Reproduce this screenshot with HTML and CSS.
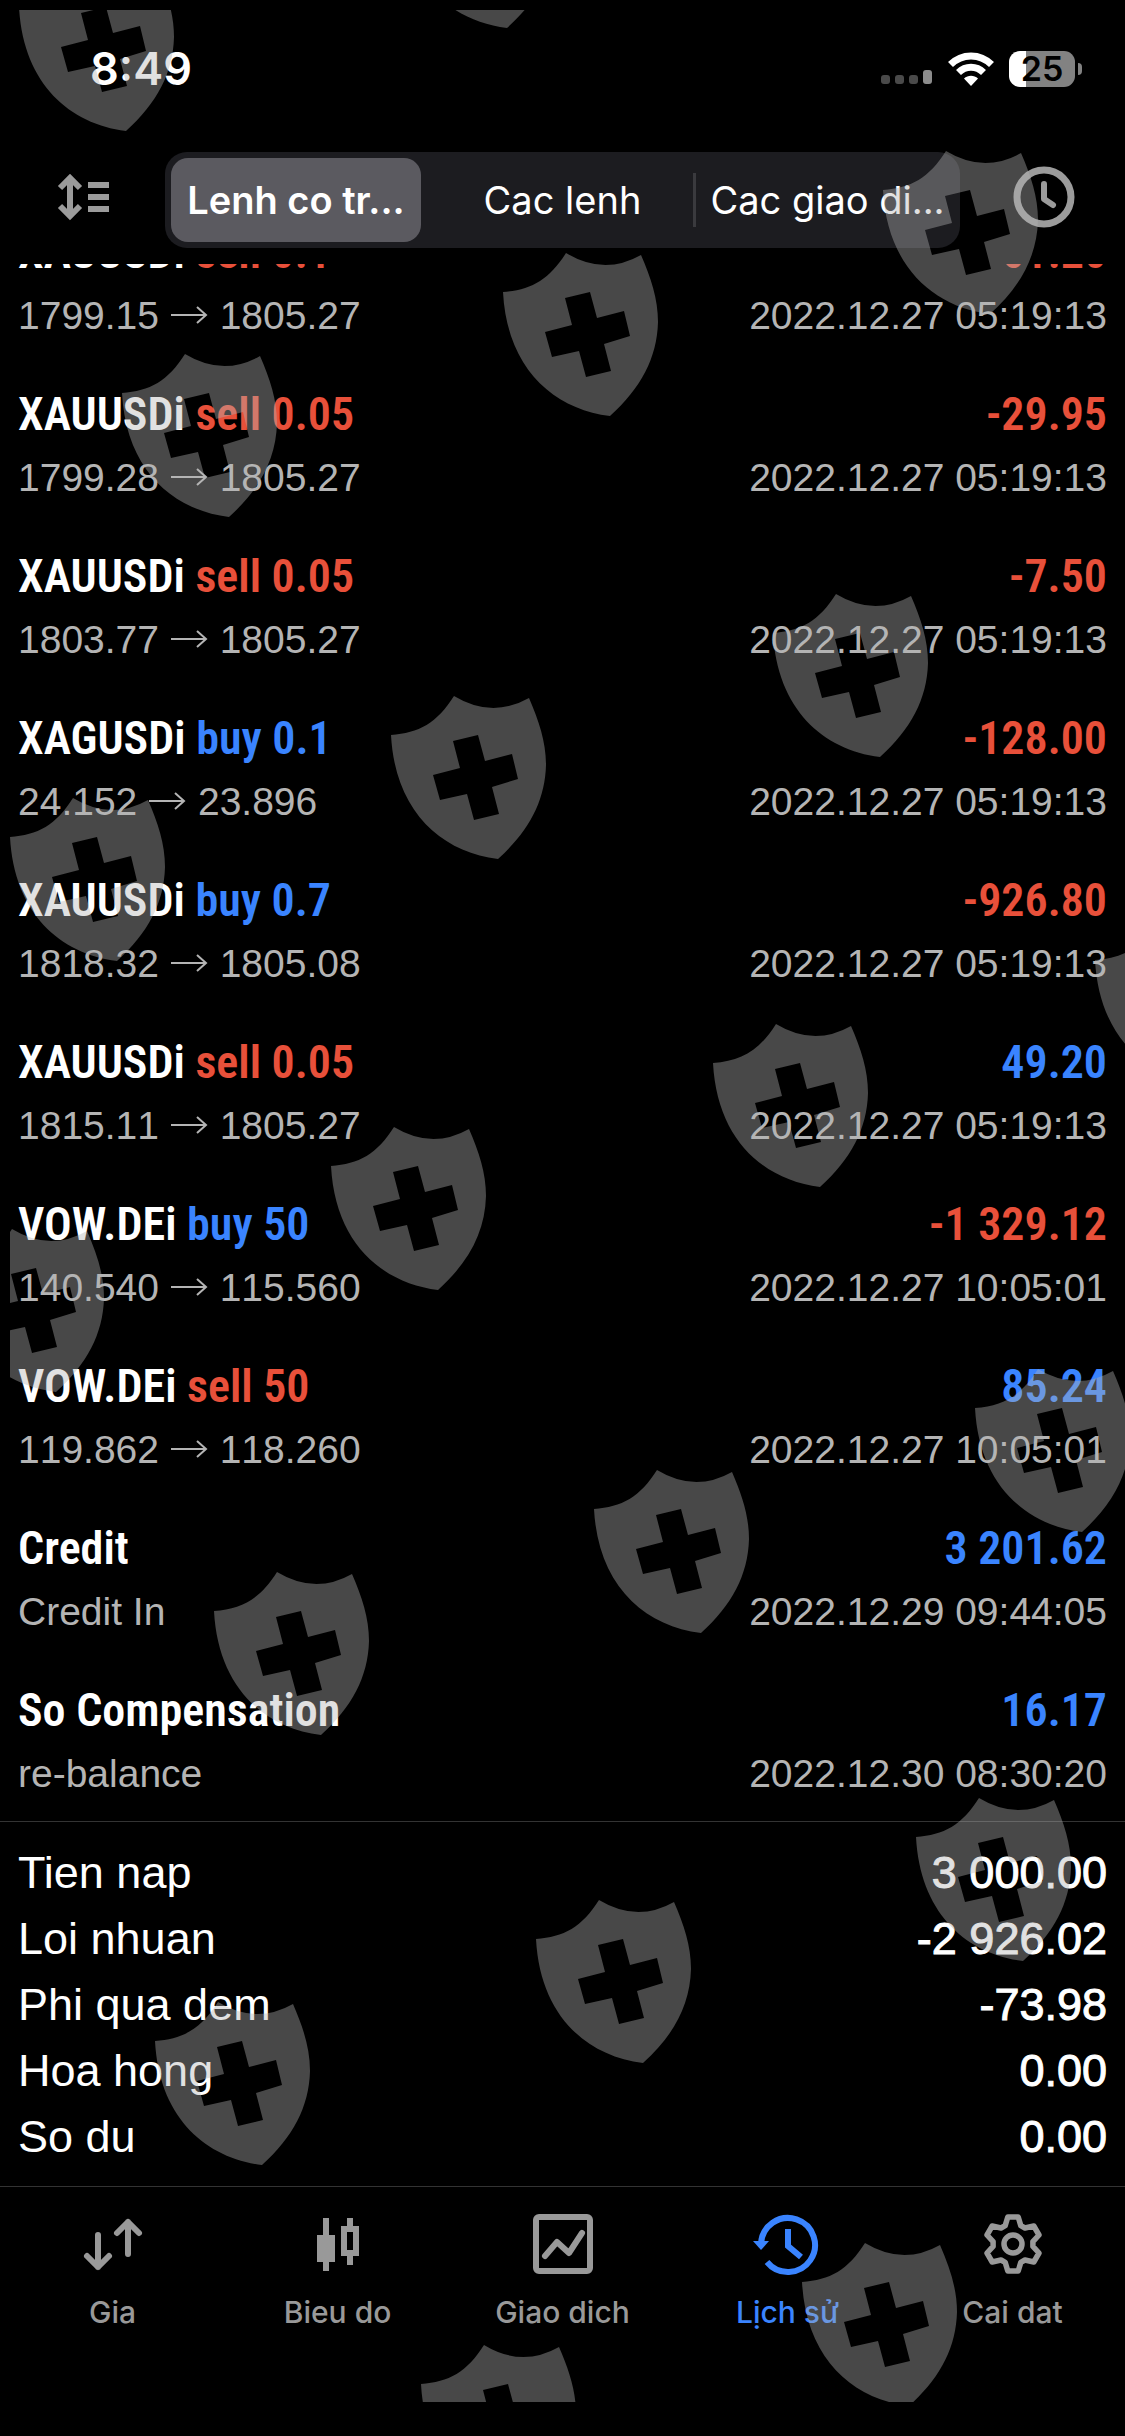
FILE: index.html
```html
<!DOCTYPE html>
<html lang="vi">
<head>
<meta charset="utf-8">
<meta name="viewport" content="width=device-width, initial-scale=1">
<title>Lịch sử</title>
<link rel="stylesheet" href="styles.css">
</head>
<body>
<div class="app">
  <header class="header">
    <div class="status">
      <span class="time">8:49</span>
      <div class="status-icons">
        <svg width="52" height="18" viewBox="0 0 52 18" aria-hidden="true">
          <g fill="#4a4a4a"><rect x="0" y="6" width="9" height="9" rx="3"/><rect x="14" y="6" width="9" height="9" rx="3"/><rect x="28" y="6" width="9" height="9" rx="3"/></g>
          <rect x="42" y="1" width="9" height="14" rx="3" fill="#8c8c8c"/>
        </svg>
        <svg width="46" height="34" viewBox="0 0 46 34" aria-hidden="true">
          <g fill="none" stroke="#fff" stroke-width="7"><path d="M2.500 12.500C14 1 32 1 43.500 12.500"/><path d="M10.500 20.500C17.500 13.500 28.500 13.500 35.500 20.500"/></g>
          <path d="M16 26.500C20 22.800 26 22.800 30 26.500L23 34Z" fill="#fff"/>
        </svg>
        <span class="battery"><span class="battery-body">25</span><span class="battery-cap"></span></span>
      </div>
    </div>
    <div class="toolbar">
      <button class="tool" type="button" aria-label="Sort">
        <svg width="52" height="48" viewBox="0 0 52 48" aria-hidden="true">
          <path d="M12 5V43M2 15L12 5L22 15M2 33L12 43L22 33" fill="none" stroke="currentColor" stroke-width="6"/>
          <path d="M30 9h21v6H30zM30 21h21v6H30zM30 33h21v6H30z" fill="currentColor"/>
        </svg>
      </button>
      <div class="segments">
        <button class="segment selected" type="button" aria-pressed="true">Lenh co tr...</button>
        <button class="segment" type="button">Cac lenh</button>
        <button class="segment divided" type="button">Cac giao di...</button>
      </div>
      <button class="tool" type="button" aria-label="Period">
        <svg width="60" height="60" viewBox="0 0 60 60" aria-hidden="true" fill="none" stroke="currentColor">
          <circle cx="30" cy="30" r="27" stroke-width="7"/>
          <path d="M30 17V32L39 38" stroke-width="6" stroke-linecap="round" stroke-linejoin="round"/>
        </svg>
      </button>
    </div>
  </header>

  <svg class="defs" width="0" height="0" aria-hidden="true">
    <symbol id="arrow" viewBox="0 0 39 20"><path d="M1 10H36M27 2L36 10L27 18" fill="none" stroke="currentColor" stroke-width="2"/></symbol>
    <path id="shield" fill-rule="evenodd" d="M0 39C28 37 46 27 63 0Q101 23 138 2C148 25 155 46 155 69C154 105 138 135 107 163C50 156 4 115 0 39ZM62 45L87 39L94 65L121 58L127 83L101 91L108 118L83 124L76 98L49 104L42 79L69 72Z"/>
  </svg>

  <main class="history">
    <ul class="deals">
      <li class="deal"><p class="name">XAUUSDi <span class="loss">sell 0.1</span></p><p class="amount loss">-61.20</p><p class="note">1799.15 <svg class="arrow"><use href="#arrow"/></svg> 1805.27</p><time class="when">2022.12.27 05:19:13</time></li>
      <li class="deal"><p class="name">XAUUSDi <span class="loss">sell 0.05</span></p><p class="amount loss">-29.95</p><p class="note">1799.28 <svg class="arrow"><use href="#arrow"/></svg> 1805.27</p><time class="when">2022.12.27 05:19:13</time></li>
      <li class="deal"><p class="name">XAUUSDi <span class="loss">sell 0.05</span></p><p class="amount loss">-7.50</p><p class="note">1803.77 <svg class="arrow"><use href="#arrow"/></svg> 1805.27</p><time class="when">2022.12.27 05:19:13</time></li>
      <li class="deal"><p class="name">XAGUSDi <span class="gain">buy 0.1</span></p><p class="amount loss">-128.00</p><p class="note">24.152 <svg class="arrow"><use href="#arrow"/></svg> 23.896</p><time class="when">2022.12.27 05:19:13</time></li>
      <li class="deal"><p class="name">XAUUSDi <span class="gain">buy 0.7</span></p><p class="amount loss">-926.80</p><p class="note">1818.32 <svg class="arrow"><use href="#arrow"/></svg> 1805.08</p><time class="when">2022.12.27 05:19:13</time></li>
      <li class="deal"><p class="name">XAUUSDi <span class="loss">sell 0.05</span></p><p class="amount gain">49.20</p><p class="note">1815.11 <svg class="arrow"><use href="#arrow"/></svg> 1805.27</p><time class="when">2022.12.27 05:19:13</time></li>
      <li class="deal"><p class="name">VOW.DEi <span class="gain">buy 50</span></p><p class="amount loss">-1 329.12</p><p class="note">140.540 <svg class="arrow"><use href="#arrow"/></svg> 115.560</p><time class="when">2022.12.27 10:05:01</time></li>
      <li class="deal"><p class="name">VOW.DEi <span class="loss">sell 50</span></p><p class="amount gain">85.24</p><p class="note">119.862 <svg class="arrow"><use href="#arrow"/></svg> 118.260</p><time class="when">2022.12.27 10:05:01</time></li>
      <li class="deal"><p class="name">Credit</p><p class="amount gain">3 201.62</p><p class="note">Credit In</p><time class="when">2022.12.29 09:44:05</time></li>
      <li class="deal"><p class="name">So Compensation</p><p class="amount gain">16.17</p><p class="note">re-balance</p><time class="when">2022.12.30 08:30:20</time></li>
    </ul>
  </main>

  <dl class="summary">
    <div class="total"><dt>Tien nap</dt><dd>3 000.00</dd></div>
    <div class="total"><dt>Loi nhuan</dt><dd>-2 926.02</dd></div>
    <div class="total"><dt>Phi qua dem</dt><dd>-73.98</dd></div>
    <div class="total"><dt>Hoa hong</dt><dd>0.00</dd></div>
    <div class="total"><dt>So du</dt><dd>0.00</dd></div>
  </dl>

  <nav class="tabs">
    <a class="tab" href="#gia">
      <svg class="tab-icon" viewBox="0 0 60 60" aria-hidden="true" fill="none" stroke="currentColor" stroke-width="6" stroke-linecap="round" stroke-linejoin="round"><path d="M15 21V53M4 42L15 53L26 42M45 40V8M34 19L45 8L56 19"/></svg>
      Gia</a>
    <a class="tab" href="#bieu-do">
      <svg class="tab-icon" viewBox="0 0 60 60" aria-hidden="true" fill="currentColor"><path d="M15 4h6v17h6v27h-6v9h-6v-9H9V21h6zM39 4h6v8h6v30h-6v9h-6v-9h-6V12h6zM39 18v18h6V18z" fill-rule="evenodd"/></svg>
      Bieu do</a>
    <a class="tab" href="#giao-dich">
      <svg class="tab-icon" viewBox="0 0 60 60" aria-hidden="true" fill="none" stroke="currentColor" stroke-width="6" stroke-linecap="round" stroke-linejoin="round"><rect x="3" y="3" width="54" height="54" rx="3"/><path d="M12 42L24 28L36 39L49 19"/></svg>
      Giao dich</a>
    <a class="tab active" href="#lich-su" aria-current="page">
      <svg class="tab-icon" viewBox="0 0 60 60" aria-hidden="true" fill="none" stroke="currentColor" stroke-width="6"><path d="M3 30A27 27 0 1 1 9 48"/><path d="M30 15V32L43 43"/><path d="M-5 27H11L3 36Z" fill="currentColor" stroke="none"/></svg>
      Lịch sử</a>
    <a class="tab" href="#cai-dat">
      <svg class="tab-icon" viewBox="-30 -30 60 60" aria-hidden="true" fill="none" stroke="currentColor" stroke-width="5.500" stroke-linejoin="round"><path d="M-7.800-18.400L-5.200-27H5.200L7.800-18.400L12-16L20.800-18L26-9L19.900-2.400V2.400L26 9L20.800 18L12 16L7.800 18.400L5.200 27H-5.200L-7.800 18.400L-12 16L-20.800 18L-26 9L-19.900 2.400V-2.400L-26-9L-20.800-18L-12-16Z"/><circle r="9"/></svg>
      Cai dat</a>
  </nav>

  <div class="watermark" aria-hidden="true">
    <svg width="100%" height="100%">
      <g transform="translate(-10 -10)">
        <use href="#shield" x="19" y="-32"/><use href="#shield" x="400" y="-135"/>
        <use href="#shield" x="883" y="151"/><use href="#shield" x="503" y="253"/>
        <use href="#shield" x="122" y="354"/><use href="#shield" x="773" y="594"/>
        <use href="#shield" x="391" y="696"/><use href="#shield" x="10" y="798"/>
        <use href="#shield" x="1095" y="921"/><use href="#shield" x="713" y="1024"/>
        <use href="#shield" x="331" y="1127"/><use href="#shield" x="-51" y="1229"/>
        <use href="#shield" x="975" y="1369"/><use href="#shield" x="594" y="1470"/>
        <use href="#shield" x="214" y="1572"/><use href="#shield" x="916" y="1798"/>
        <use href="#shield" x="536" y="1900"/><use href="#shield" x="155" y="2002"/>
        <use href="#shield" x="802" y="2243"/><use href="#shield" x="421" y="2345"/>
      </g>
    </svg>
  </div>
</div>
</body>
</html>
```
FILE: styles.css
```css
* { box-sizing: border-box; }

body {
  margin: 0;
  background: #000;
  color: #fff;
  font-family: "Liberation Sans", Arial, sans-serif;
}

p, ul, dl, dd { margin: 0; padding: 0; }

button {
  margin: 0;
  padding: 0;
  border: 0;
  background: none;
  color: inherit;
  font: inherit;
}

svg { display: block; overflow: visible; }

.defs { position: absolute; }

.app {
  position: relative;
  display: flex;
  flex-direction: column;
  height: 100vh;
  overflow: hidden;
}

/* Status bar and toolbar */
.status {
  display: flex;
  align-items: center;
  justify-content: space-between;
  height: 138px;
  padding: 0 43px 0 90px;
}

.time {
  font: 600 45px/48px Inter, sans-serif;
}

.status-icons { display: flex; align-items: center; gap: 15px; }

.status-icons svg:first-child { align-self: flex-end; }

.battery { display: flex; align-items: center; gap: 3px; }

.battery-body {
  width: 66px;
  border-radius: 11px;
  background: linear-gradient(90deg, #fff 17px, #828282 17px);
  color: #000;
  font: 600 34px/36px Inter, sans-serif;
  text-align: center;
}

.battery-cap {
  width: 4px;
  height: 12px;
  border-radius: 0 4px 4px 0;
  background: #828282;
}

.toolbar {
  display: grid;
  grid-template-columns: 165px 1fr 165px;
  padding: 14px 0 16px;
}

.tool {
  display: grid;
  place-items: center;
  padding: 0 0 6px 2px;
  color: #9b9b9b;
}

.segments {
  display: grid;
  grid-template-columns: repeat(3, 1fr);
  height: 96px;
  padding: 6px;
  border-radius: 22px;
  background: #1c1c20;
}

.segment {
  position: relative;
  border-radius: 17px;
  font: 400 38px/48px Inter, sans-serif;
  white-space: nowrap;
}

.selected {
  margin-right: 11px;
  background: #5b5a60;
  font-weight: 600;
}

.divided { padding-left: 8px; }

.divided::before {
  content: "";
  position: absolute;
  left: 0;
  top: 15px;
  bottom: 15px;
  width: 3px;
  background: #3a3a3e;
}

.history {
  display: flex;
  flex: 1 1 0;
  flex-direction: column;
  justify-content: flex-end;
  min-height: 0;
  overflow: hidden;
}

.deals { list-style: none; }

.deal {
  display: grid;
  grid-template-columns: 1fr auto;
  row-gap: 13px;
  padding: 23px 18px 24px;
}

.name, .amount {
  font: 600 46px/56px "Roboto Condensed", "Liberation Sans Narrow", sans-serif;
}

.note, .when {
  color: #b4b4b4;
  font-size: 39px;
  font-kerning: none;
  line-height: 46px;
}

.amount, .when { text-align: right; }

.arrow {
  display: inline-block;
  width: 39px;
  height: 20px;
  vertical-align: 4px;
}

.gain { color: #3a84ff; }
.loss { color: #e8503a; }

/* Account totals */
.summary {
  padding: 18px 18px 16px;
  border-top: 1px solid #333;
  font-size: 45px;
  line-height: 66px;
}

.total { display: flex; justify-content: space-between; }

.total dd { -webkit-text-stroke: 1px currentColor; }

/* Bottom tabs */
.tabs {
  display: grid;
  grid-template-columns: repeat(5, 1fr);
  height: 250px;
  padding-top: 27px;
  border-top: 1px solid #333;
}

.tab {
  display: flex;
  flex-direction: column;
  align-items: center;
  gap: 20px;
  color: #999;
  font: 500 30px/36px Inter, sans-serif;
  text-decoration: none;
}

.tab-icon { width: 60px; height: 60px; }

.active { color: #3a84ff; }

/* Shield pattern over the whole screen */
.watermark {
  position: absolute;
  inset: 10px 0 34px 10px;
  overflow: hidden;
  fill: rgba(180, 180, 180, 0.4);
  pointer-events: none;
}

.watermark svg { overflow: hidden; }
```
